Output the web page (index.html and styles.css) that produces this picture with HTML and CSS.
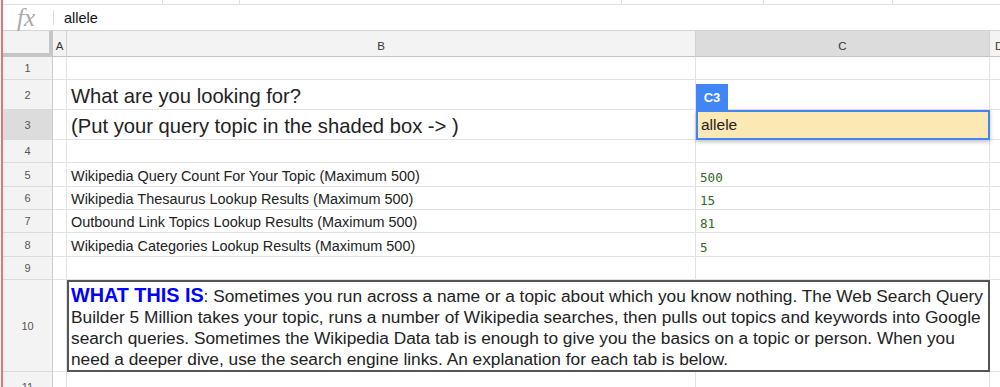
FILE: index.html
```html
<!DOCTYPE html>
<html>
<head>
<meta charset="utf-8">
<link rel="stylesheet" href="styles.css">
</head>
<body>
<div class="app">
  <div class="topstrip">
    <div class="ts ts1"></div><div class="ts ts2"></div><div class="ts ts3"></div><div class="ts ts4"></div><div class="ts ts5"></div><div class="ts ts6"></div>
  </div>
  <div class="fbar">
    <span class="fx">fx</span>
    <span class="sep"></span>
    <span class="fval">allele</span>
  </div>
  <div class="sheet">
    <div class="corner"></div>
    <div class="colh">A</div>
    <div class="colh">B</div>
    <div class="colh sel">C</div>
    <div class="colh last">D</div>

    <div class="rowh">1</div><div class="c"></div><div class="c"></div><div class="c"></div><div class="c last"></div>

    <div class="rowh">2</div><div class="c"></div><div class="c big">What are you looking for?</div><div class="c"></div><div class="c last"></div>

    <div class="rowh sel">3</div><div class="c"></div><div class="c big">(Put your query topic in the shaded box -&gt; )</div>
    <div class="c active"><span class="tag">C3</span><span class="edit">allele</span></div><div class="c last"></div>

    <div class="rowh">4</div><div class="c"></div><div class="c"></div><div class="c"></div><div class="c last"></div>

    <div class="rowh">5</div><div class="c"></div><div class="c txt">Wikipedia Query Count For Your Topic (Maximum 500)</div><div class="c num">500</div><div class="c last"></div>
    <div class="rowh">6</div><div class="c"></div><div class="c txt">Wikipedia Thesaurus Lookup Results (Maximum 500)</div><div class="c num">15</div><div class="c last"></div>
    <div class="rowh">7</div><div class="c"></div><div class="c txt">Outbound Link Topics Lookup Results (Maximum 500)</div><div class="c num">81</div><div class="c last"></div>
    <div class="rowh">8</div><div class="c"></div><div class="c txt">Wikipedia Categories Lookup Results (Maximum 500)</div><div class="c num">5</div><div class="c last"></div>

    <div class="rowh">9</div><div class="c"></div><div class="c"></div><div class="c"></div><div class="c last"></div>

    <div class="rowh">10</div><div class="c"></div>
    <div class="c merged"><span class="hl">WHAT THIS IS</span>: Sometimes you run across a name or a topic about which you know nothing. The Web Search Query<br>Builder 5 Million takes your topic, runs a number of Wikipedia searches, then pulls out topics and keywords into Google<br>search queries. Sometimes the Wikipedia Data tab is enough to give you the basics on a topic or person. When you<br>need a deeper dive, use the search engine links. An explanation for each tab is below.</div>
    <div class="c last"></div>

    <div class="rowh">11</div><div class="c"></div><div class="c"></div><div class="c"></div><div class="c last"></div>
  </div>
</div>
</body>
</html>
```

FILE: styles.css
```css
* { box-sizing: border-box; }
html, body { margin: 0; padding: 0; background: #fff; }
body { font-family: "Liberation Sans", Arial, sans-serif; overflow: hidden; }

.app {
  margin-left: 1px;
  border-left: 2px solid #e27474;
  height: 387px;
  overflow: hidden;
}

.topstrip {
  display: flex;
  height: 5px;
  border-bottom: 1px solid #e0e0e0;
}
.ts { border-right: 1px solid #e0e0e0; height: 100%; }
.ts1 { width: 160px; }
.ts2 { width: 77px; }
.ts3 { width: 382px; }
.ts4 { width: 142px; }
.ts5 { width: 129px; }
.ts6 { flex: 1; border-right: none; }

.fbar {
  display: flex;
  align-items: center;
  height: 26px;
  border-bottom: 1px solid #d4d4d4;
}
.fx {
  font-family: "Liberation Serif", "Times New Roman", serif;
  font-style: italic;
  font-size: 25px;
  color: #aaaaaa;
  width: 50px;
  padding-left: 14px;
  line-height: 25px;
}
.sep {
  width: 1px;
  height: 15px;
  background: #dadada;
}
.fval {
  padding-left: 10px;
  font-size: 14.5px;
  color: #111;
}

.sheet {
  display: grid;
  grid-template-columns: 50px 14px 629px 294px 1fr;
  grid-template-rows: 26px 23px 30px 30px 23px 24px 23px 23px 24px 23px 92px 30px;
}

.corner {
  background: #f3f3f3;
  border-right: 4px solid #c6c6c6;
  border-bottom: 4px solid #c6c6c6;
}
.colh {
  background: #f3f3f3;
  border-right: 1px solid #d2d2d2;
  border-bottom: 1px solid #c4c4c4;
  display: flex;
  align-items: center;
  justify-content: center;
  font-size: 11.5px;
  color: #333;
  padding-top: 4px;
}
.colh.sel { background: #dcdcdc; }
.colh.last { justify-content: flex-start; padding-left: 5px; border-right: none; }

.rowh {
  background: #f3f3f3;
  border-right: 1px solid #cccccc;
  border-bottom: 1px solid #dadada;
  display: flex;
  align-items: center;
  justify-content: center;
  font-size: 11px;
  color: #555;
}
.rowh.sel { background: #dcdcdc; }

.c {
  border-right: 1px solid #e2e2e2;
  border-bottom: 1px solid #e2e2e2;
  display: flex;
  align-items: flex-end;
  padding-left: 4px;
  white-space: nowrap;
  color: #222;
}
.c.last { border-right: none; }

.big {
  font-size: 20.2px;
  line-height: 23px;
  padding-bottom: 1px;
}
.txt {
  font-size: 14.45px;
  line-height: 17px;
  padding-bottom: 1px;
}
.num {
  font-family: "DejaVu Sans Mono", "Liberation Mono", monospace;
  font-size: 12.6px;
  color: #2f6a27;
  line-height: 17px;
  padding-bottom: 0;
}

.active {
  position: relative;
  background: #fce8b2;
  border: 2px solid #4285f4;
  box-shadow: 0 2px 4px rgba(0,0,0,0.25);
  padding-left: 3px;
  align-items: center;
  overflow: visible;
}
.edit {
  font-size: 15.5px;
  color: #222;
}
.tag {
  position: absolute;
  left: -2px;
  bottom: 100%;
  margin-bottom: 2px;
  width: 32px;
  height: 26px;
  background: #4285f4;
  color: #fff;
  font-weight: bold;
  font-size: 13px;
  display: flex;
  align-items: center;
  justify-content: center;
}

.merged {
  grid-column: 3 / 5;
  border: 2px solid #555;
  display: block;
  padding: 3px 0 0 2px;
  font-size: 17.3px;
  line-height: 21px;
  color: #222;
}
.hl {
  color: #0000ff;
  font-weight: bold;
  font-size: 19.8px;
}
```
